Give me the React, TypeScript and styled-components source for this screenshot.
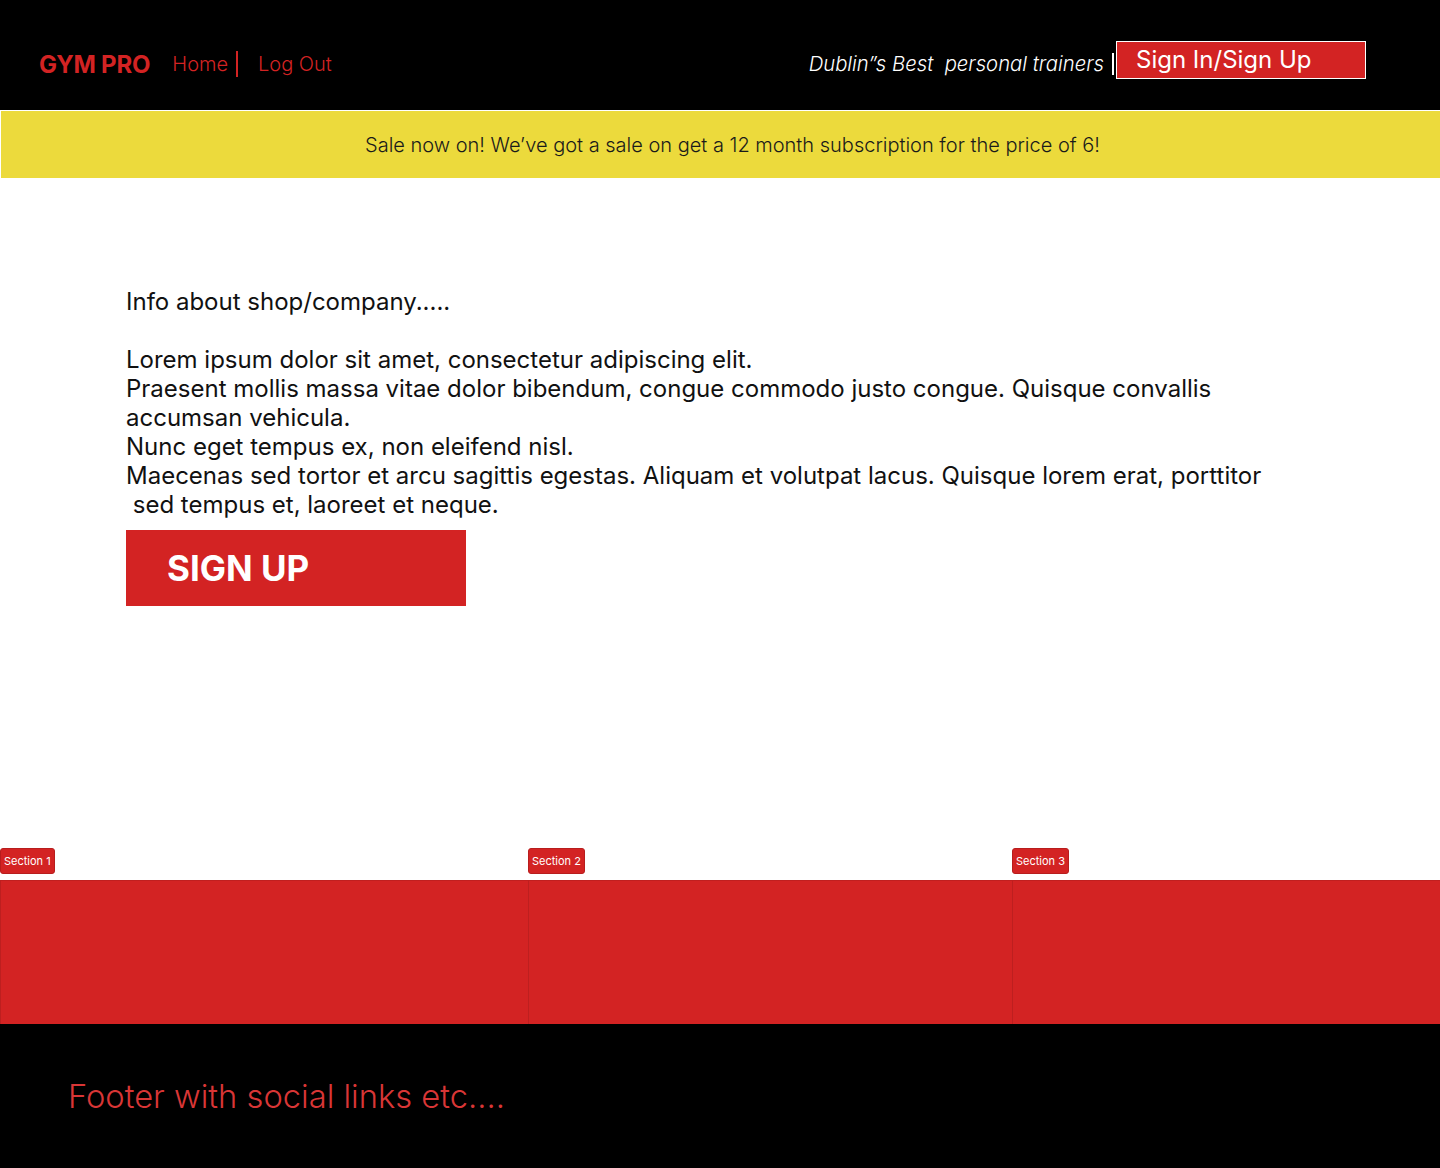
import styled, { createGlobalStyle } from "styled-components";

const red = "#d32323";

const GlobalStyle = createGlobalStyle`
  html, body {
    margin: 0;
    padding: 0;
    background: #fff;
    font-family: Inter, "Noto Sans", sans-serif;
  }
`;

const Page = styled.div`
  width: 1440px;
  min-height: 1168px;
  display: flex;
  flex-direction: column;
`;

const Header = styled.header`
  height: 111px;
  box-sizing: border-box;
  background: #000;
  display: flex;
  align-items: center;
  justify-content: space-between;
  padding: 10px 74px 0 39px;
  border-bottom: 1px solid #fff;
`;

const NavLeft = styled.nav`
  display: flex;
  align-items: center;
  padding-top: 8px;
`;

const Logo = styled.div`
  color: ${red};
  font-size: 24px;
  font-weight: 700;
  letter-spacing: -0.2px;
  margin-right: 22px;
`;

const NavLink = styled.a<{ divider?: boolean }>`
  color: ${red};
  font-size: 20px;
  font-weight: 300;
  text-decoration: none;
  padding-right: ${(p) => (p.divider ? "8px" : "0")};
  margin-right: ${(p) => (p.divider ? "20px" : "0")};
  border-right: ${(p) => (p.divider ? `2px solid ${red}` : "none")};
  line-height: 26px;
`;

const NavRight = styled.div`
  display: flex;
  align-items: center;
`;

const Tagline = styled.span`
  color: #fff;
  font-size: 20.3px;
  font-style: italic;
  font-weight: 300;
  white-space: pre;
  padding-right: 8px;
  margin-top: 8px;
  border-right: 2px solid #fff;
  line-height: 22px;
`;

const SignInButton = styled.button`
  width: 250px;
  height: 38px;
  margin-left: 2px;
  background: ${red};
  border: 1px solid #fff;
  color: #fff;
  font-family: Inter, sans-serif;
  font-size: 24px;
  font-weight: 400;
  text-align: left;
  padding: 0 0 2px 19px;
  cursor: pointer;
`;

const Banner = styled.div`
  height: 67px;
  background: #ecda3c;
  border-left: 1px solid #fff;
  display: flex;
  align-items: center;
  justify-content: center;
  padding-left: 24px;
  font-size: 20px;
  font-weight: 300;
  color: #1a1a1a;
`;

const Main = styled.main`
  height: 670px;
  padding: 109px 0 0 126px;
  box-sizing: border-box;
`;

const Info = styled.p`
  margin: 0;
  font-size: 24px;
  line-height: 29px;
  color: #111;
  white-space: pre;
`;

const SignUpButton = styled.button`
  margin-top: 11px;
  width: 340px;
  height: 76px;
  background: ${red};
  border: none;
  color: #fff;
  font-family: Inter, sans-serif;
  font-size: 35px;
  font-weight: 700;
  text-align: left;
  padding: 0 0 0 41px;
  cursor: pointer;
`;

const Sections = styled.section`
  display: grid;
  grid-template-columns: 528px 484px 428px;
`;

const SectionCol = styled.div`
  display: flex;
  flex-direction: column;
  align-items: flex-start;
`;

const SectionLabel = styled.span`
  height: 26px;
  box-sizing: border-box;
  display: flex;
  align-items: center;
  padding: 0 3px;
  background: ${red};
  border: 1px solid #b81d1d;
  border-radius: 3px;
  color: #fff;
  font-size: 11px;
  margin-bottom: 6px;
`;

const SectionBlock = styled.div`
  align-self: stretch;
  height: 144px;
  box-sizing: border-box;
  background: ${red};
  border-left: 1px solid #bd1f1f;
  border-top: 1px solid #c01f1f;
`;

const Footer = styled.footer`
  flex: 1;
  height: 144px;
  background: #000;
  display: flex;
  align-items: center;
  padding-left: 68px;
  color: #d93636;
  font-size: 32.7px;
  font-weight: 300;
`;

const infoText = `Info about shop/company.....

Lorem ipsum dolor sit amet, consectetur adipiscing elit.
Praesent mollis massa vitae dolor bibendum, congue commodo justo congue. Quisque convallis
accumsan vehicula.
Nunc eget tempus ex, non eleifend nisl.
Maecenas sed tortor et arcu sagittis egestas. Aliquam et volutpat lacus. Quisque lorem erat, porttitor
 sed tempus et, laoreet et neque.`;

export default function App() {
  return (
    <Page>
      <GlobalStyle />
      <Header>
        <NavLeft>
          <Logo>GYM PRO</Logo>
          <NavLink href="#" divider>Home</NavLink>
          <NavLink href="#">Log Out</NavLink>
        </NavLeft>
        <NavRight>
          <Tagline>Dublin”s Best  personal trainers</Tagline>
          <SignInButton>Sign In/Sign Up</SignInButton>
        </NavRight>
      </Header>

      <Banner>Sale now on! We’ve got a sale on get a 12 month subscription for the price of 6!</Banner>

      <Main>
        <Info>{infoText}</Info>
        <SignUpButton>SIGN UP</SignUpButton>
      </Main>

      <Sections>
        {["Section 1", "Section 2", "Section 3"].map((s) => (
          <SectionCol key={s}>
            <SectionLabel>{s}</SectionLabel>
            <SectionBlock />
          </SectionCol>
        ))}
      </Sections>

      <Footer>Footer with social links etc....</Footer>
    </Page>
  );
}
